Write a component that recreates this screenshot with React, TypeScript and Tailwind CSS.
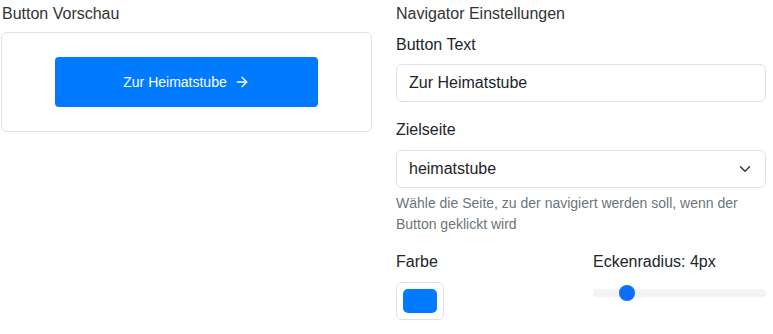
import { ArrowRight } from "lucide-react";

const radius = 4;
const maxRadius = 25;

const CornerSlider = ({ value, max }: { value: number; max: number }) => {
  const pct = value / max;
  return (
    <div className="relative h-6 w-full flex items-center">
      <div className="h-2 w-full rounded-full bg-[#f1f3f5]" />
      <div
        className="absolute top-1/2 -translate-y-1/2 h-4 w-4 rounded-full bg-[#0d6efd]"
        style={{ left: `calc((100% - 16px) * ${pct} + 1px)` }}
      />
    </div>
  );
};

const App = () => {
  return (
    <div className="font-['Liberation_Sans',Arial,sans-serif] text-base text-[#212529] bg-white min-h-[334px]">
      <div className="flex gap-6 pl-px pt-[2px]">
        <div className="w-[371px] shrink-0">
          <h5 className="pl-px leading-6 text-[#333]">Button Vorschau</h5>
          <div className="mt-[6px] rounded-md border border-[#dee2e6] py-6 flex justify-center">
            <button
              className="w-[263px] h-[50px] bg-[#007bff] text-white text-sm flex items-center justify-center gap-[7px]"
              style={{ borderRadius: radius }}
            >
              Zur Heimatstube
              <ArrowRight size={16} strokeWidth={2} />
            </button>
          </div>
        </div>

        <div className="w-[370px] shrink-0">
          <h5 className="leading-6 text-[#333]">Navigator Einstellungen</h5>

          <label className="block mt-[7px] leading-6">Button Text</label>
          <input
            className="mt-[7px] block w-full h-[38px] rounded-md border border-[#dee2e6] px-3 leading-6 outline-none"
            defaultValue="Zur Heimatstube"
          />

          <label className="block mt-4 leading-6">Zielseite</label>
          <div className="relative mt-2">
            <select className="block w-full h-[38px] appearance-none rounded-md border border-[#dee2e6] bg-white pl-3 pr-9 leading-6 outline-none">
              <option>heimatstube</option>
            </select>
            <svg
              className="absolute right-[13px] top-[13px] pointer-events-none"
              width="16"
              height="12"
              viewBox="0 0 16 16"
              fill="none"
              stroke="#343a40"
              strokeWidth="2"
              strokeLinecap="round"
              strokeLinejoin="round"
            >
              <path d="m2 5 6 6 6-6" />
            </svg>
          </div>
          <p className="mt-[5px] text-sm leading-[21px] text-[#6c757d]">
            Wähle die Seite, zu der navigiert werden soll, wenn der Button geklickt wird
          </p>

          <div className="mt-[15px] grid grid-cols-2 gap-x-6">
            <div>
              <label className="block leading-6">Farbe</label>
              <div className="mt-2 w-12 h-[38px] rounded-md border border-[#dee2e6] p-[6px]">
                <div className="h-full w-full rounded-[5px] bg-[#007bff]" />
              </div>
            </div>
            <div>
              <label className="block leading-6">Eckenradius: {radius}px</label>
              <div className="mt-[7px]">
                <CornerSlider value={radius} max={maxRadius} />
              </div>
            </div>
          </div>
        </div>
      </div>
    </div>
  );
};

export default App;
